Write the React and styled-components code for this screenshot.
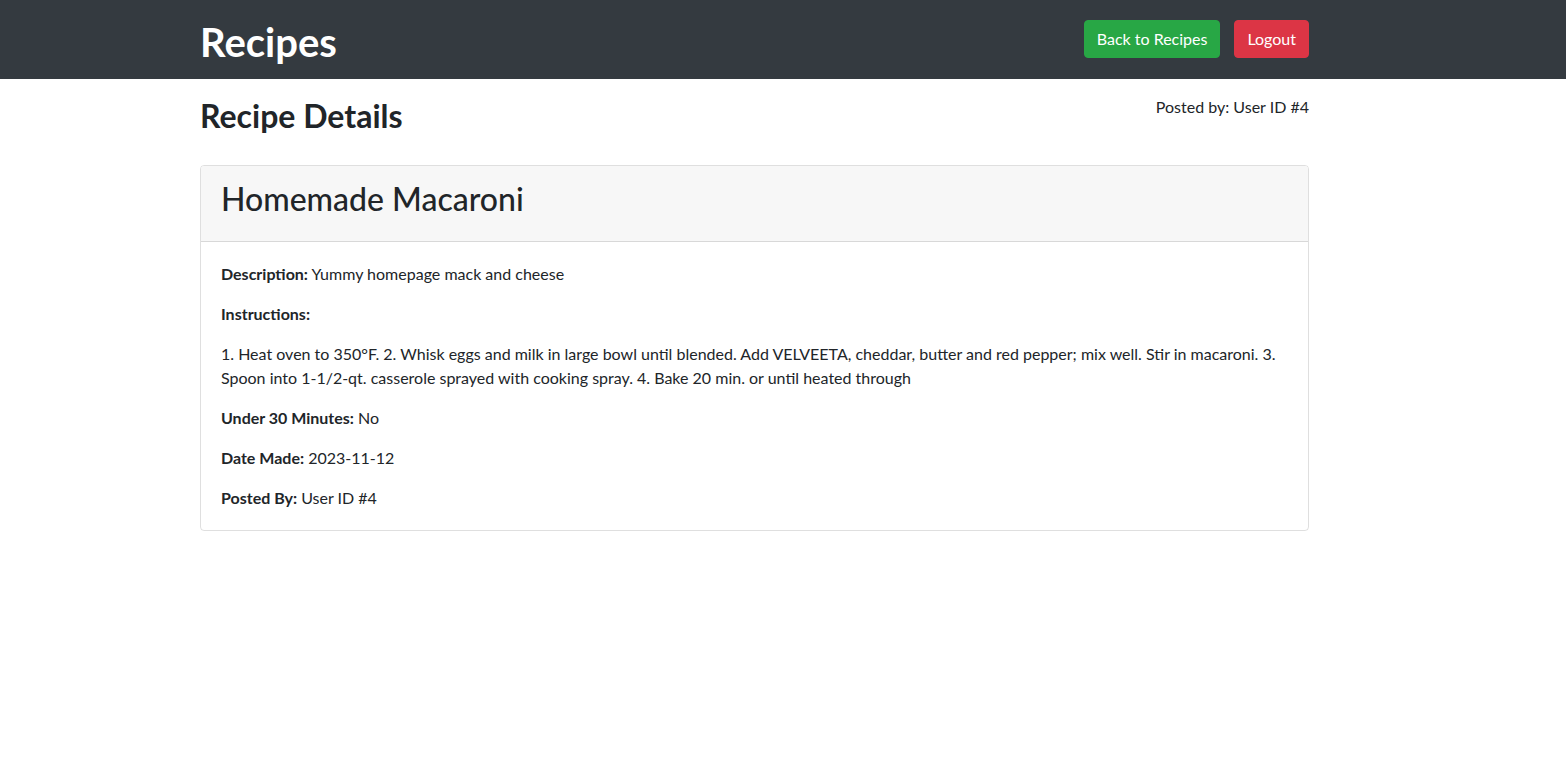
import styled, { createGlobalStyle } from "styled-components";

const GlobalStyle = createGlobalStyle`
  body {
    margin: 0;
    font-family: Lato, "Open Sans", Arial, sans-serif;
    font-size: 16px;
    line-height: 1.5;
    color: #212529;
    background: #fff;
  }
  * { box-sizing: border-box; }
`;

const recipe = {
  title: "Homemade Macaroni",
  description: "Yummy homepage mack and cheese",
  instructions:
    "1. Heat oven to 350°F. 2. Whisk eggs and milk in large bowl until blended. Add VELVEETA, cheddar, butter and red pepper; mix well. Stir in macaroni. 3. Spoon into 1-1/2-qt. casserole sprayed with cooking spray. 4. Bake 20 min. or until heated through",
  under30: "No",
  dateMade: "2023-11-12",
  userId: 4,
};

export default function App() {
  return (
    <>
      <GlobalStyle />
      <StyledNavbar>
        <StyledContainer>
          <StyledBrand>Recipes</StyledBrand>
          <StyledActions>
            <StyledButton $variant="success">Back to Recipes</StyledButton>
            <StyledButton $variant="danger">Logout</StyledButton>
          </StyledActions>
        </StyledContainer>
      </StyledNavbar>
      <StyledMain>
        <StyledPageHeader>
          <StyledTitle>Recipe Details</StyledTitle>
          <StyledPostedBy>Posted by: User ID #{recipe.userId}</StyledPostedBy>
        </StyledPageHeader>
        <StyledCard>
          <StyledCardHeader>
            <StyledCardTitle>{recipe.title}</StyledCardTitle>
          </StyledCardHeader>
          <StyledCardBody>
            <StyledText>
              <strong>Description:</strong> {recipe.description}
            </StyledText>
            <StyledText>
              <strong>Instructions:</strong>
            </StyledText>
            <StyledText>{recipe.instructions}</StyledText>
            <StyledText>
              <strong>Under 30 Minutes:</strong> {recipe.under30}
            </StyledText>
            <StyledText>
              <strong>Date Made:</strong> {recipe.dateMade}
            </StyledText>
            <StyledText>
              <strong>Posted By:</strong> User ID #{recipe.userId}
            </StyledText>
          </StyledCardBody>
        </StyledCard>
      </StyledMain>
    </>
  );
}

const StyledNavbar = styled.header`
  background: #343a40;
  height: 79px;
  display: flex;
  align-items: center;
`;

const StyledContainer = styled.div`
  width: 1109px;
  margin-left: 200px;
  display: flex;
  align-items: center;
  justify-content: space-between;
`;

const StyledBrand = styled.h1`
  margin: 0;
  color: #fff;
  font-size: 40px;
  font-weight: 700;
  line-height: 1.2;
  transform: translateY(2px);
`;

const StyledActions = styled.div`
  display: flex;
  gap: 14px;
  margin-top: -2px;
`;

const StyledButton = styled.button`
  font-family: inherit;
  font-size: 16px;
  line-height: 1.5;
  padding: 6px 12px;
  border-radius: 4px;
  border: 1px solid
    ${({ $variant }) => ($variant === "danger" ? "#dc3545" : "#28a745")};
  background: ${({ $variant }) =>
    $variant === "danger" ? "#dc3545" : "#28a745"};
  color: #fff;
  cursor: pointer;
`;

const StyledMain = styled.main`
  width: 1109px;
  margin-left: 200px;
`;

const StyledPageHeader = styled.div`
  display: flex;
  justify-content: space-between;
  align-items: flex-start;
  padding-top: 18px;
  margin-bottom: 30px;
`;

const StyledTitle = styled.h2`
  margin: 0;
  font-size: 32px;
  font-weight: 700;
  line-height: 1.2;
`;

const StyledPostedBy = styled.p`
  margin: -2px 0 0;
  font-size: 16px;
`;

const StyledCard = styled.section`
  border: 1px solid rgba(0, 0, 0, 0.125);
  border-radius: 4px;
  overflow: hidden;
`;

const StyledCardHeader = styled.div`
  background: #f7f7f7;
  border-bottom: 1px solid rgba(0, 0, 0, 0.125);
  padding: 12px 20px 21px;
`;

const StyledCardTitle = styled.h2`
  margin: 0;
  font-size: 32px;
  font-weight: 500;
  line-height: 1.3;
`;

const StyledCardBody = styled.div`
  padding: 20px 20px 4px;
`;

const StyledText = styled.p`
  margin: 0 0 16px;
  font-size: 16px;
  line-height: 24px;

  strong {
    font-weight: 700;
  }
`;
